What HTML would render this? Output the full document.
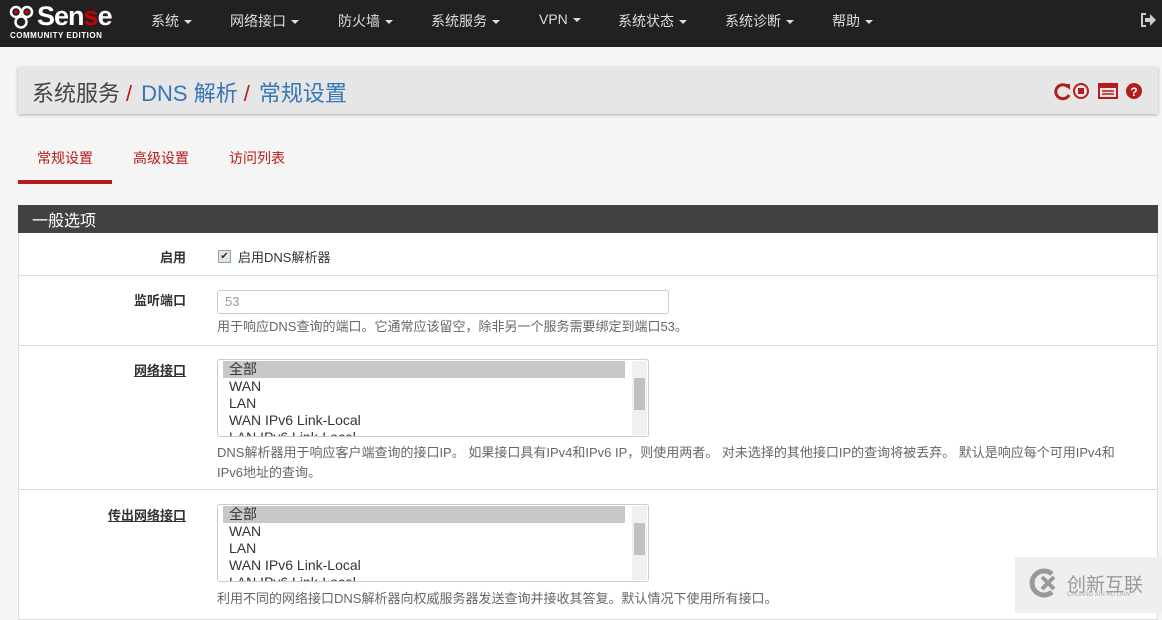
<!DOCTYPE html>
<html><head><meta charset="utf-8"><style>
*{box-sizing:border-box;margin:0;padding:0}
body{width:1162px;height:613px;overflow:hidden;background:#f5f5f5;font-family:"Liberation Sans","Noto Sans CJK SC",sans-serif;font-size:14px;color:#333;position:relative}
.nav{position:absolute;left:0;top:0;width:1162px;height:47px;background:#212121}
.nav .m{position:absolute;top:11px;color:#ddd;font-size:14px}
.car{display:inline-block;border-left:4px solid transparent;border-right:4px solid transparent;border-top:4px solid #ddd;vertical-align:middle;margin-left:5px}
.bc{position:absolute;left:18px;top:67px;width:1140px;height:47px;background:#e6e6e6;box-shadow:0 1px 3px rgba(0,0,0,.3);font-size:22px;padding:9px 14px;color:#444}
.bc .s{color:#b71c1c;margin:0 9px 0 6px}.bc .b{color:#3477b7}
.tab{position:absolute;top:148px;font-size:14px;color:#b71c1c}
.ph{position:absolute;left:18px;top:205px;width:1140px;height:28px;background:#424242;color:#fff;font-size:16px;padding:2px 14px}
.row{position:absolute;left:18px;width:1140px;background:#fff;border-bottom:1px solid #ddd;border-left:1px solid #ddd;border-right:1px solid #ddd}
.lab{position:absolute;right:971px;font-weight:bold;font-size:13px;color:#333}
.u{text-decoration:underline}
.help{position:absolute;left:198px;font-size:13px;color:#666;line-height:20px}
.sel{position:absolute;left:198px;width:432px;height:78px;border:1px solid #ccc;border-radius:3px;overflow:hidden;font-size:14px;line-height:17px;padding:1px 0 0 5px}
.sel div{padding-left:6px;width:402px}
.sel .h{background:#c8c8c8}
.sb{position:absolute;right:1px;top:1px;width:15px;height:74px;background:#f0f0f0}
.sb i{position:absolute;left:2px;top:17px;width:11px;height:32px;background:#c1c1c1}
</style></head><body>
<div class="nav">
<svg style="position:absolute;left:9px;top:5px" width="26" height="24" viewBox="0 0 26 24"><circle cx="7" cy="7" r="5" fill="none" stroke="#fff" stroke-width="2.5"/><circle cx="18" cy="7" r="5" fill="none" stroke="#fff" stroke-width="2.5"/><circle cx="12" cy="17" r="5.5" fill="none" stroke="#fff" stroke-width="2.5"/><circle cx="7" cy="7" r="2" fill="#c00"/><circle cx="18" cy="7" r="2" fill="#c00"/></svg>
<div style="position:absolute;left:37px;top:1px;color:#fff;font-weight:bold;font-size:27px;letter-spacing:-1px;font-family:'Liberation Sans Narrow','Liberation Sans',sans-serif">Sen<span style="color:#c00">s</span>e</div>
<div style="position:absolute;left:10px;top:31px;color:#fff;font-weight:bold;font-size:8px;letter-spacing:.5px">COMMUNITY EDITION</div>
<span class="m" style="left:151px">系统<i class="car"></i></span>
<span class="m" style="left:230px">网络接口<i class="car"></i></span>
<span class="m" style="left:338px">防火墙<i class="car"></i></span>
<span class="m" style="left:431px">系统服务<i class="car"></i></span>
<span class="m" style="left:539px">VPN<i class="car"></i></span>
<span class="m" style="left:618px">系统状态<i class="car"></i></span>
<span class="m" style="left:725px">系统诊断<i class="car"></i></span>
<span class="m" style="left:832px">帮助<i class="car"></i></span>
<svg style="position:absolute;left:1140px;top:12px" width="16" height="16" viewBox="0 0 16 16"><path d="M6 2H2v12h4" fill="none" stroke="#ccc" stroke-width="2"/><path d="M5 6h5V2l6 6-6 6v-4H5z" fill="#ccc"/></svg>
</div>
<div class="bc">系统服务<span class="s">/</span><span class="b">DNS 解析</span><span class="s">/</span><span class="b">常规设置</span>
<svg style="position:absolute;left:1036px;top:16px" width="110" height="18" viewBox="0 0 110 18"><path d="M14 4A7 7 0 1 0 15 12" fill="none" stroke="#b71c1c" stroke-width="3"/><path d="M10 1h6v6z" fill="#b71c1c"/><circle cx="27" cy="8" r="7" fill="none" stroke="#b71c1c" stroke-width="2"/><rect x="24" y="5" width="6" height="6" fill="#b71c1c"/><rect x="45" y="1" width="18" height="14" fill="none" stroke="#b71c1c" stroke-width="2"/><rect x="45" y="1" width="18" height="4" fill="#b71c1c"/><path d="M48 8h12M48 11h12" stroke="#b71c1c" stroke-width="1.5"/><circle cx="80" cy="8" r="8" fill="#b71c1c"/><text x="80" y="13" font-size="12" font-weight="bold" fill="#fff" text-anchor="middle" font-family="Liberation Sans">?</text></svg>
</div>
<span class="tab" style="left:37px">常规设置</span>
<div style="position:absolute;left:18px;top:180px;width:94px;height:4px;background:#b71c1c"></div>
<span class="tab" style="left:133px">高级设置</span>
<span class="tab" style="left:229px">访问列表</span>
<div class="ph">一般选项</div>
<div class="row" style="top:233px;height:43px">
<span class="lab" style="top:14px">启用</span>
<span style="position:absolute;left:199px;top:17px;width:13px;height:13px;border:1px solid #8aa;background:#dde4ee;font-size:10px;line-height:11px;text-align:center">✔</span>
<span style="position:absolute;left:219px;top:14px;font-size:13px">启用DNS解析器</span>
</div>
<div class="row" style="top:276px;height:70px">
<span class="lab" style="top:14px">监听端口</span>
<div style="position:absolute;left:198px;top:14px;width:452px;height:24px;border:1px solid #ccc;border-radius:3px;color:#999;font-size:13px;padding:3px 7px">53</div>
<div class="help" style="top:41px">用于响应DNS查询的端口。它通常应该留空，除非另一个服务需要绑定到端口53。</div>
</div>
<div class="row" style="top:346px;height:144px">
<span class="lab u" style="top:14px">网络接口</span>
<div class="sel" style="top:13px"><div class="h">全部</div><div>WAN</div><div>LAN</div><div>WAN IPv6 Link-Local</div><div>LAN IPv6 Link-Local</div><span class="sb"><i></i></span></div>
<div class="help" style="top:97px;width:922px">DNS解析器用于响应客户端查询的接口IP。 如果接口具有IPv4和IPv6 IP，则使用两者。 对未选择的其他接口IP的查询将被丢弃。 默认是响应每个可用IPv4和IPv6地址的查询。</div>
</div>
<div class="row" style="top:490px;height:130px">
<span class="lab u" style="top:15px">传出网络接口</span>
<div class="sel" style="top:14px"><div class="h">全部</div><div>WAN</div><div>LAN</div><div>WAN IPv6 Link-Local</div><div>LAN IPv6 Link-Local</div><span class="sb"><i></i></span></div>
<div class="help" style="top:99px">利用不同的网络接口DNS解析器向权威服务器发送查询并接收其答复。默认情况下使用所有接口。</div>
</div>
<div style="position:absolute;left:1015px;top:557px;width:147px;height:56px;background:#efefef"></div>
<svg style="position:absolute;left:1028px;top:568px" width="34" height="30" viewBox="0 0 34 30"><path d="M24 6A12 12 0 1 0 24 24" fill="none" stroke="#999" stroke-width="5"/><path d="M14 9l12 12M26 9L14 21" stroke="#999" stroke-width="4"/></svg>
<span style="position:absolute;left:1067px;top:570px;font-size:19px;color:#999">创新互联</span>
<span style="position:absolute;left:1067px;top:592px;font-size:6px;color:#aaa">CHUANG XIN HU LIAN</span>
</body></html>
